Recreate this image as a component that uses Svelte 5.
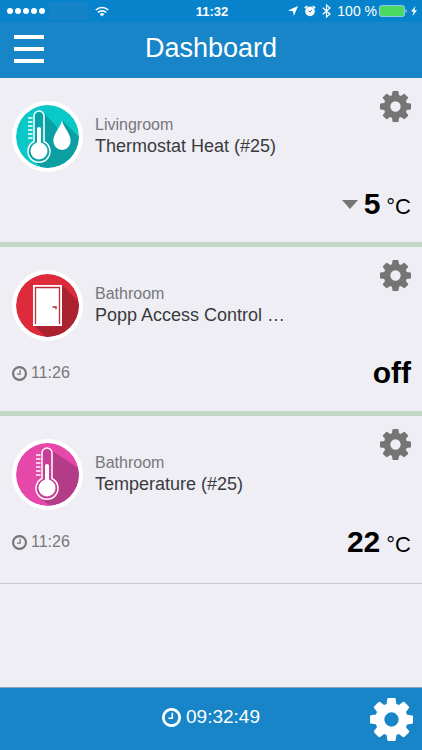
<script lang="ts">
	// Room sensor dashboard: one card per device, a clock in the footer.

	interface Device {
		id: string;
		room: string;
		name: string;
		icon: 'thermostat' | 'door' | 'temperature';
		time?: string;
		value: string;
		unit?: string;
		falling?: boolean;
	}

	const devices: Device[] = [
		{ id: 'heat', room: 'Livingroom', name: 'Thermostat Heat (#25)', icon: 'thermostat', value: '5', unit: '°C', falling: true },
		{ id: 'door', room: 'Bathroom', name: 'Popp Access Control …', icon: 'door', time: '11:26', value: 'off' },
		{ id: 'temp', room: 'Bathroom', name: 'Temperature (#25)', icon: 'temperature', time: '11:26', value: '22', unit: '°C' }
	];

	const clock = '09:32:49';
	const ticks = [13, 17, 21, 25, 29, 33];
</script>

{#snippet cog()}
	<svg class="cog" viewBox="128 128 1536 1536" aria-hidden="true">
		<path
			d="M1152 896q0-106-75-181t-181-75-181 75-75 181 75 181 181 75 181-75 75-181zm512-109v222q0 12-8 23t-20 13l-185 28q-19 54-39 91 35 50 107 138 10 12 10 25t-9 23q-27 37-99 108t-94 71q-12 0-26-9l-138-108q-44 23-91 38-16 136-29 186-7 28-36 28h-222q-14 0-24.5-8.5t-11.5-21.5l-28-184q-49-16-90-37l-141 107q-10 9-25 9-14 0-25-11-126-114-165-168-7-10-7-23 0-12 8-23 15-21 51-66.5t54-70.5q-27-50-41-99l-183-27q-13-2-21-12.5t-8-23.5v-222q0-12 8-23t19-13l186-28q14-46 39-92-40-57-107-138-10-12-10-24 0-10 9-23 26-36 98.5-107.5t94.5-71.5q13 0 26 10l138 107q44-23 91-38 16-136 29-186 7-28 36-28h222q14 0 24.5 8.5t11.5 21.5l28 184q49 16 90 37l142-107q9-9 24-9 13 0 25 10 129 119 165 170 7 8 7 22 0 12-8 23-15 21-51 66.5t-54 70.5q26 50 41 98l183 28q13 2 21 12.5t8 23.5z"
		/>
	</svg>
{/snippet}

{#snippet clockFace()}
	<svg class="clock" viewBox="128 128 1536 1536" aria-hidden="true">
		<path
			d="M1024 544v448q0 14-9 23t-23 9h-320q-14 0-23-9t-9-23v-64q0-14 9-23t23-9h224v-352q0-14 9-23t23-9h64q14 0 23 9t9 23zm416 352q0-148-73-273t-198-198-273-73-273 73-198 198-73 273 73 273 198 198 273 73 273-73 198-198 73-273zm224 0q0 209-103 385.5t-279.5 279.5-385.5 103-385.5-103-279.5-279.5-103-385.5 103-385.5 279.5-279.5 385.5-103 385.5 103 279.5 279.5 103 385.5z"
		/>
	</svg>
{/snippet}

{#snippet thermometer(fill: string)}
	<path d="M18 11a5 5 0 0 1 10 0v25.5a11 11 0 1 1-10 0z" {fill} stroke="#fff" stroke-width="1.5" />
	<circle cx="23" cy="46" r="8.5" fill="#fff" />
	<path d="M21 40V24a2 2 0 0 1 4 0v16z" fill="#fff" />
	{#each ticks as y (y)}
		<path d="M12 {y}h4.5" stroke="#fff" stroke-width="1.5" />
	{/each}
{/snippet}

<div class="app">
	<div class="status">
		<div class="side">
			<span class="signal"><i></i><i></i><i></i><i></i><i></i></span>
			<span class="carrier"></span>
			<svg class="wifi" viewBox="0 0 14 11" aria-label="Wi-Fi">
				<g fill="none" stroke="#fff" stroke-width="1.7">
					<path d="M.8 4a9 9 0 0 1 12.4 0" />
					<path d="M3 6.4a5.8 5.8 0 0 1 8 0" />
				</g>
				<path d="M4.7 8.2a3.3 3.3 0 0 1 4.6 0L7 10.6z" fill="#fff" />
			</svg>
		</div>
		<span class="now">11:32</span>
		<div class="side right">
			<svg width="10" height="10" viewBox="0 0 10 10" aria-label="Location">
				<path d="M10 0 5.8 10 5 5.2 0 4.4z" fill="#fff" />
			</svg>
			<svg width="12" height="12" viewBox="0 0 12 12" aria-label="Alarm">
				<circle cx="6" cy="6.4" r="4.8" fill="#fff" />
				<path d="M.8 3.2 3.2 1M11.2 3.2 8.800 1" stroke="#fff" stroke-width="1.6" />
				<path d="M6 7 8 4.8M6 7 4.400 6" fill="none" stroke="#0683cb" />
			</svg>
			<svg width="9" height="14" viewBox="0 0 9 14" aria-label="Bluetooth">
				<path d="M.8 3.8 8 10 4.5 13V1L8 4 .8 10.2" fill="none" stroke="#fff" stroke-width="1.2" />
			</svg>
			<span class="percent">100 %</span>
			<svg width="28" height="12" viewBox="0 0 28 12" aria-label="Battery">
				<rect x=".5" y=".5" width="25" height="11" rx="2" fill="#4cd964" stroke="#8fc9ee" />
				<path d="M26.5 4q1.5 .5 1.5 2t-1.5 2z" fill="#8fc9ee" />
			</svg>
			<svg class="bolt" width="6" height="10" viewBox="0 0 6 10" aria-label="Charging">
				<path d="M4.5 0 0 5.6h2.6L1.5 10 6 4.3H3.4z" fill="#fff" />
			</svg>
		</div>
	</div>

	<header>
		<button class="menu" aria-label="Menu"><i></i><i></i><i></i></button>
		<h1>Dashboard</h1>
	</header>

	<main>
		{#each devices as d (d.id)}
			<article>
				<div class="top">
					<svg class="badge" viewBox="0 0 63 63" aria-hidden="true">
						<defs>
							<clipPath id="disc-{d.id}"><circle cx="31.5" cy="31.5" r="31.5" /></clipPath>
						</defs>
						<g clip-path="url(#disc-{d.id})">
							{#if d.icon === 'thermostat'}
								<path fill="#08c8c8" d="M0 0h63v63H0z" />
								<path fill="#0b9ea2" d="M27 7 41 22v6L47 16 65 34v31H28L15 53z" />
								{@render thermometer('#08a4a8')}
								<path
									d="M46 15.5c1 6 8.7 13 8.7 20.5a8.7 9 0 0 1-17.4 0c0-7.5 7.7-14.5 8.7-20.5z"
									fill="#fff"
								/>
							{:else if d.icon === 'door'}
								<path fill="#dd2b3b" d="M0 0h63v63H0z" />
								<path fill="#ab2230" d="M46 11 65 30v35H31L18 51z" />
								<path fill="#fff" d="M17 11h29v41H17z" />
								<path d="M19.5 50V13.5h24V50" fill="none" stroke="#c52a38" stroke-width="1.3" />
								<path d="M36.5 33h3.5v2" fill="none" stroke="#b92735" stroke-width="1.5" />
							{:else}
								<path fill="#e548a9" d="M0 0h63v63H0z" />
								<path fill="#b33c88" d="M35 7 65 27v38H36L22 52z" />
								<g transform="translate(8 -1)">
									{@render thermometer('#c93f97')}
								</g>
							{/if}
						</g>
					</svg>
					<div class="label">
						<p class="room">{d.room}</p>
						<h2>{d.name}</h2>
					</div>
					<button class="settings" aria-label="Settings for {d.name}">{@render cog()}</button>
				</div>
				<div class="bottom">
					{#if d.time}
						<time>{@render clockFace()}{d.time}</time>
					{/if}
					<p class="reading">
						{#if d.falling}<span class="falling"></span>{/if}
						<strong>{d.value}</strong>
						{#if d.unit}<span class="unit">{d.unit}</span>{/if}
					</p>
				</div>
			</article>
		{/each}
	</main>

	<footer>
		<time>{@render clockFace()}{clock}</time>
		<button class="settings" aria-label="Settings">{@render cog()}</button>
	</footer>
</div>

<style>
	.app {
		display: flex;
		flex-direction: column;
		min-height: 100vh;
		background: #efeef4;
		color: #000;
		font-family: 'Liberation Sans', Arial, sans-serif;
	}
	h1,
	h2,
	p {
		margin: 0;
		font-weight: 400;
	}
	button {
		display: block;
		padding: 0;
		border: 0;
		background: none;
		color: inherit;
		cursor: pointer;
	}
	svg {
		display: block;
		flex: none;
	}
	.cog {
		width: 100%;
		fill: currentColor;
	}
	.clock {
		fill: currentColor;
	}

	.status {
		display: flex;
		align-items: center;
		height: 22px;
		padding: 0 5px 0 7px;
		background: #0683cb;
		color: #fff;
		font-size: 13px;
	}
	.side {
		display: flex;
		flex: 1 1 0;
		align-items: center;
	}
	.side.right {
		justify-content: flex-end;
		gap: 6px;
	}
	.signal {
		display: flex;
		gap: 2px;
	}
	.signal i {
		width: 6px;
		height: 6px;
		border-radius: 50%;
		background: #fff;
	}
	.carrier {
		width: 39px;
		height: 18px;
		margin: 0 7px 0 4px;
		background: #1483c7;
	}
	.wifi {
		width: 14px;
	}
	.now {
		font-weight: 700;
	}
	.percent {
		margin-right: -4px;
		font-size: 14px;
	}
	.bolt {
		margin-left: -2px;
	}

	header {
		display: grid;
		grid-template-columns: 44px 1fr 44px;
		align-items: center;
		height: 56px;
		background: #1785c7;
		color: #fff;
	}
	.menu {
		display: flex;
		flex-direction: column;
		gap: 8px;
		padding: 0 0 2px 14px;
	}
	.menu i {
		width: 30px;
		height: 4px;
		background: #fff;
	}
	h1 {
		padding-bottom: 4px;
		font-size: 27px;
		line-height: 32px;
		text-align: center;
	}

	main {
		flex: 1;
	}
	article {
		padding: 13px 11px 20px 12px;
		border-bottom: 5px solid #c3d7c6;
	}
	article:last-child {
		padding-bottom: 23px;
		border-bottom: 1px solid #c8c7cc;
	}
	.top {
		display: flex;
		align-items: flex-start;
		gap: 12px;
	}
	.badge {
		width: 63px;
		height: 63px;
		margin-top: 10px;
		border: 4px solid #fff;
		border-radius: 50%;
	}
	.label {
		flex: 1;
		min-width: 0;
		padding-top: 24px;
	}
	.room {
		color: #77777b;
		font-size: 16px;
		line-height: 20px;
	}
	h2 {
		overflow: hidden;
		color: #3a3a3d;
		font-size: 18px;
		line-height: 22px;
		text-overflow: ellipsis;
		white-space: nowrap;
	}
	.settings {
		width: 31px;
		color: #757575;
	}
	.bottom {
		display: flex;
		align-items: center;
		margin-top: 14px;
	}
	.bottom time {
		display: flex;
		align-items: center;
		gap: 4px;
		color: #77777b;
		font-size: 16px;
	}
	.bottom .clock {
		width: 15px;
	}
	.reading {
		display: flex;
		align-items: baseline;
		gap: 6px;
		margin-left: auto;
		line-height: 36px;
	}
	.reading strong {
		font-size: 30px;
	}
	.unit {
		font-size: 22px;
		line-height: 24px;
	}
	.falling {
		align-self: center;
		border: 8px solid transparent;
		border-top: 9px solid #757575;
		border-bottom: 0;
	}

	footer {
		display: grid;
		grid-template-columns: 1fr auto 1fr;
		align-items: center;
		height: 62px;
		border-top: 1px solid #8fa5b3;
		background: #1785c7;
		color: #fff;
	}
	footer time {
		display: flex;
		grid-column: 2;
		align-items: center;
		gap: 5px;
		padding-bottom: 4px;
		font-size: 19px;
	}
	footer .clock {
		width: 19px;
	}
	footer .settings {
		justify-self: end;
		width: 43px;
		margin-right: 9px;
		color: #fff;
	}
</style>
